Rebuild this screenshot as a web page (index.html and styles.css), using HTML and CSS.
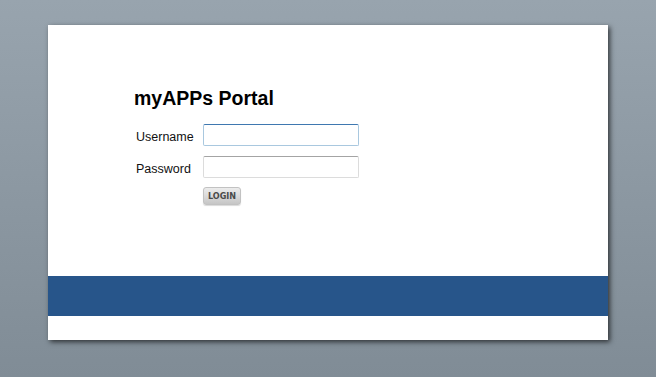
FILE: index.html
```html
<!DOCTYPE html>
<html lang="en">
<head>
    <meta charset="UTF-8">
    <meta name="viewport" content="width=device-width, initial-scale=1.0">
    <title>myAPPs Portal</title>
    <link rel="stylesheet" href="styles.css">
</head>
<body>
    <div class="card">
        <div class="login">
            <h1 class="title">myAPPs Portal</h1>
            <form class="login-form" onsubmit="return false;">
                <label class="label" for="username">Username</label>
                <input class="field field-focus" type="text" id="username" name="username">
                <label class="label" for="password">Password</label>
                <input class="field" type="password" id="password" name="password">
                <button class="login-button" type="submit">LOGIN</button>
            </form>
        </div>
        <div class="band"></div>
        <div class="footer"></div>
    </div>
</body>
</html>
```

FILE: styles.css
```css
html {
    height: 100%;
}

body {
    margin: 0;
    padding: 25px 0 0 0;
    min-height: 100%;
    box-sizing: border-box;
    font-family: 'Liberation Sans', Arial, sans-serif;
    background: linear-gradient(to bottom, #98a4ae 0%, #808c96 100%);
}

.card {
    width: 560px;
    margin: 0 auto;
    background-color: #ffffff;
    box-shadow: 2px 2px 5px rgba(0, 0, 0, 0.65);
}

.login {
    height: 251px;
    box-sizing: border-box;
    padding: 62px 0 0 86px;
}

.title {
    margin: 0;
    font-size: 19.5px;
    line-height: 22px;
    font-weight: bold;
    color: #000000;
}

.login-form {
    display: grid;
    grid-template-columns: 67px 156px;
    grid-auto-rows: 22px;
    row-gap: 10px;
    margin: 15px 0 0 2px;
}

.label {
    align-self: end;
    font-size: 12.5px;
    line-height: 17px;
    color: #111111;
}

.field {
    width: 156px;
    height: 22px;
    box-sizing: border-box;
    margin: 0;
    padding: 2px 4px;
    border: 1px solid #dcdcdc;
    border-top-color: #a4a4a4;
    border-radius: 2px;
    background: #ffffff;
    font-family: 'Liberation Sans', Arial, sans-serif;
    font-size: 12px;
    outline: none;
}

.field-focus {
    border-color: #a9c8df;
    border-top-color: #3f78b0;
}

.login-button {
    grid-column: 2;
    justify-self: start;
    width: 38px;
    height: 18px;
    margin-top: -1px;
    padding: 0;
    border: 1px solid #c2c2c2;
    border-radius: 3px;
    background: linear-gradient(to bottom, #ececec 0%, #d8d8d8 55%, #c6c6c6 100%);
    box-shadow: 0 1px 1px rgba(0, 0, 0, 0.15);
    font-family: 'DejaVu Sans Condensed', 'DejaVu Sans', sans-serif;
    font-size: 9px;
    font-weight: bold;
    color: #4a4a4a;
    cursor: pointer;
}

.band {
    height: 40px;
    background-color: #27558a;
}

.footer {
    height: 24px;
}
```
